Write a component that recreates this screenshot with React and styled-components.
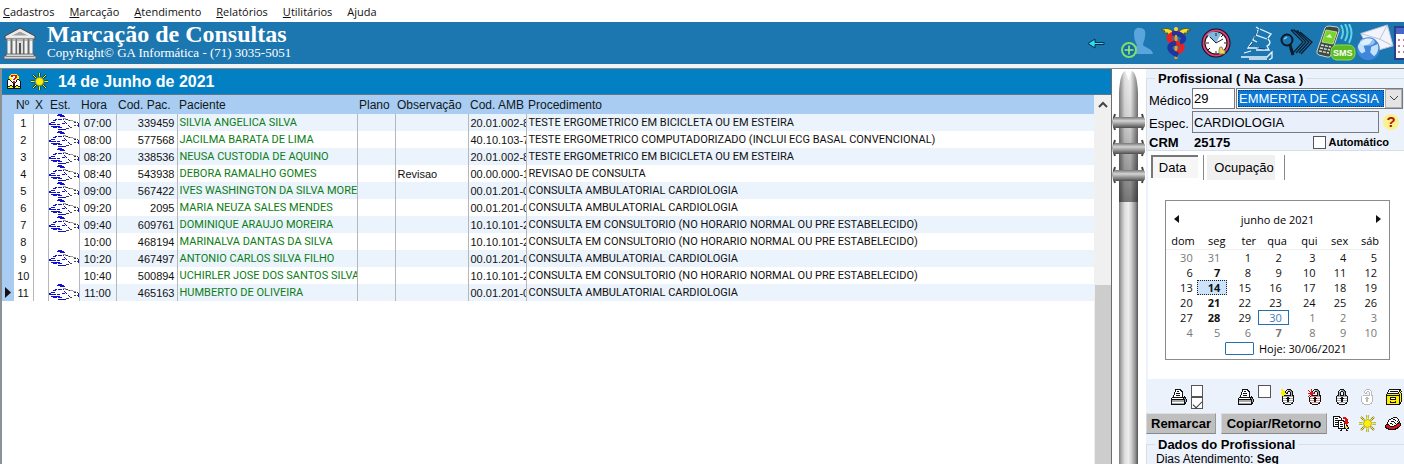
import React from "react";
import styled, { createGlobalStyle, css } from "styled-components";

const sans = '"Liberation Sans", Arial, sans-serif';
const narrow = 'Roboto, "Liberation Sans", sans-serif';
const ui = '"Open Sans", "Noto Sans", sans-serif';
const serif = '"Liberation Serif", "Times New Roman", serif';

const Global = createGlobalStyle`
  * { box-sizing: border-box; }
  body { margin: 0; background: #fff; color: #000; font-family: ${sans}; font-size: 12px; }
  button, input, select { font-family: inherit; color: inherit; border-radius: 0; margin: 0; }
  svg { display: block; }
`;

const Shell = styled.div`
  display: flex;
  flex-direction: column;
  height: 100vh;
  overflow: hidden;
`;

/* ---------- menu and banner ---------- */
const MenuBar = styled.nav`
  display: flex;
  flex: none;
  gap: 15px;
  height: 22px;
  padding: 2px 3px 0;
  font-family: ${ui};
`;
const MenuLink = styled.a`
  color: #111;
  font-size: 11px;
  line-height: 20px;
  text-decoration: none;
`;
const Banner = styled.header`
  display: flex;
  flex: none;
  align-items: center;
  height: 42px;
  padding-left: 3px;
  background: #1c77b0;
  color: #fff;
  font-family: ${serif};
`;
const BannerText = styled.div`
  flex: 1;
  padding: 0 0 5px 10px;
  white-space: nowrap;
`;
const BannerTitle = styled.h1`
  margin: 0;
  font-size: 24px;
  line-height: 24px;
`;
const BannerNote = styled.p`
  margin: 0;
  font-size: 13px;
  line-height: 13px;
`;
const BannerTools = styled.div`
  display: flex;
  width: 328px;
  overflow: hidden;
`;
const ToolButton = styled.button`
  display: flex;
  flex: none;
  align-items: center;
  justify-content: center;
  width: ${(p) => p.$width}px;
  height: 40px;
  padding: 0;
  border: 0;
  background: none;
`;
const Divider = styled.div`
  flex: none;
  height: 5px;
  background: #f1f4f7;
  border-bottom: 1px solid #85898d;
`;

const Main = styled.main`
  display: flex;
  flex: 1;
  min-height: 0;
`;

/* ---------- schedule ---------- */
const Schedule = styled.section`
  display: flex;
  flex: 1;
  flex-direction: column;
  min-width: 0;
  border-left: 2px solid #8c9196;
  border-right: 1px solid #6a6d70;
`;
const DayBar = styled.div`
  display: flex;
  flex: none;
  align-items: center;
  gap: 10px;
  height: 26px;
  padding: 0 5px;
  background: #0380c4;
  border-bottom: 1px solid #62788a;
  color: #fff;
`;
const DayTitle = styled.h2`
  margin: 0;
  font-size: 16px;
  line-height: 24px;
`;
const GridArea = styled.div`
  display: flex;
  flex: 1;
  min-height: 0;
`;
const GridBody = styled.div`
  flex: 1;
  min-width: 0;
`;
const Grid = styled.table`
  width: 100%;
  table-layout: fixed;
  border-collapse: collapse;
`;
const HeadCell = styled.th`
  height: 19px;
  padding: 1px 0 0 2px;
  background: #a9ccf2;
  color: #101820;
  font-size: 12px;
  font-weight: normal;
  line-height: 18px;
  text-align: left;
  white-space: nowrap;
`;
const Row = styled.tr`
  background: #fff;
  &:nth-child(odd) { background: #ebf3fd; }
`;
const Cell = styled.td`
  height: 17px;
  padding: 1px 2px 0;
  border-right: ${(p) => (p.$last ? 0 : "1px solid #b4b8bd")};
  overflow: hidden;
  color: ${(p) => (p.$green ? "#0b7d15" : "#111")};
  font-size: 11px;
  line-height: 16px;
  text-align: ${(p) => p.$align || "left"};
  white-space: nowrap;
  ${(p) => p.$caps && css`font-family: ${narrow};`}
  ${(p) => p.$white && css`background: #fff;`}
  ${(p) => p.$icon && css`padding: 0;`}
`;
const Marker = styled.td`
  padding: 0 0 0 3px;
  background: #a9ccf2;
`;
const ScrollBar = styled.div`
  display: flex;
  flex: none;
  flex-direction: column;
  width: 17px;
  padding-left: 1px;
  background: #f0f0f0;
`;
const ScrollUp = styled.button`
  display: flex;
  flex: none;
  align-items: center;
  justify-content: center;
  height: 18px;
  padding: 0;
  border: 0;
  background: none;
`;
const ScrollTrack = styled.div`
  display: flex;
  flex: 1;
  align-items: flex-end;
`;
const ScrollThumb = styled.div`
  width: 100%;
  height: 51%;
  background: #cdcdcd;
`;

/* ---------- binder pole ---------- */
const Binder = styled.div`
  display: flex;
  flex: none;
  flex-direction: column;
  width: 34px;
`;
const Pole = styled.div`
  flex: 1;
  width: 19px;
  margin-left: 7px;
  background: linear-gradient(90deg, #808080 0, #b4b4b4 15%, #dedede 30%, #eee 50%, #d0d0d0 65%, #8c8c8c 88%, #505050 100%);
`;

/* ---------- side panel ---------- */
const Side = styled.aside`
  flex: none;
  width: 258px;
  overflow: hidden;
  background: #ecf2fc;
`;
const Group = styled.fieldset`
  min-width: 0;
  margin: 0;
  padding: 0 0 0 2px;
  border: 1px solid #d5dfe6;
  border-right: 0;
`;
const Legend = styled.legend`
  margin-left: 6px;
  padding: 2px 3px 0;
  font-size: 13px;
  font-weight: bold;
  line-height: 16px;
  white-space: nowrap;
`;
const Line = styled.div`
  display: flex;
  align-items: center;
  height: ${(p) => p.$height}px;
`;
const Label = styled.label`
  flex: none;
  width: 43px;
  padding-top: 3px;
  font-size: 13px;
  white-space: nowrap;
`;
const TextBox = styled.input`
  width: ${(p) => p.$width}px;
  height: ${(p) => (p.$tall ? 22 : 21)}px;
  padding: 0 1px;
  border: 1px solid #777b80;
  background: ${(p) => (p.$tall ? "#e9effb" : "#fff")};
  font-size: 13px;
`;
const DoctorBox = styled.div`
  display: grid;
  flex: none;
  align-items: stretch;
  width: 167px;
  height: 21px;
  margin-left: 1px;
  border: 1px solid #777b80;
  background: #fff;
`;
const DoctorSelect = styled.select`
  grid-area: 1 / 1;
  min-width: 0;
  margin: 1px 18px 1px 1px;
  padding: 0 0 0 1px;
  border: 0;
  outline: 1px dotted #0b3d70;
  outline-offset: -1px;
  appearance: none;
  background: #0a78d6;
  color: #fff;
  font-size: 13px;
`;
const DoctorArrow = styled.span`
  display: flex;
  grid-area: 1 / 1;
  align-items: center;
  justify-content: center;
  justify-self: end;
  width: 17px;
  border: 1px solid #b0b0b0;
  background: #e4e4e4;
  pointer-events: none;
`;
const HelpButton = styled.button`
  width: 16px;
  height: 16px;
  margin-left: 4px;
  padding: 0;
  border: 0;
  border-radius: 8px;
  background: #fbf28c;
  color: #b3140f;
  font-size: 15px;
  font-weight: bold;
  line-height: 16px;
`;
const CrmTag = styled.span`
  width: 45px;
  font-size: 13px;
  font-weight: bold;
`;
const Crm = styled.strong`
  flex: 1;
  font-size: 13px;
`;
const AutoLabel = styled.label`
  display: flex;
  align-items: center;
  gap: 3px;
  padding-right: 15px;
  font-size: 11px;
  font-weight: bold;
`;
const Check = styled.input`
  display: grid;
  width: ${(p) => p.$size}px;
  height: ${(p) => p.$size}px;
  border: 1px solid #555;
  appearance: none;
  background: #fff;
  &:checked::before {
    content: "";
    place-self: center;
    width: 8px;
    height: 4px;
    border-left: 1px solid #333;
    border-bottom: 1px solid #333;
    transform: rotate(-45deg);
  }
`;
const Page = styled.div`
  height: 228px;
  margin-left: 2px;
  background: #fff;
`;
const Tabs = styled.div`
  display: flex;
  align-items: flex-start;
  padding: 4px 0 0 3px;
`;
const Tab = styled.button`
  width: ${(p) => p.$width}px;
  height: ${(p) => (p.$on ? 23 : 25)}px;
  padding: 0;
  border: 0;
  background: ${(p) => (p.$on ? "#f6f6f6" : "#f0f0f0")};
  font-size: 13px;
  ${(p) => p.$on
    ? css`
        border-top: 2px solid #777;
        border-left: 2px solid #777;
        padding-right: 6px;
      `
    : css`
        margin-left: 5px;
        border-left: 1px solid #888;
        border-right: 1px solid #888;
        box-shadow: inset 3px 0 #fff, inset -9px 0 #fff;
      `}
`;
const Calendar = styled.div`
  width: 225px;
  height: 160px;
  margin: 20px 0 0 17px;
  padding: 8px 8px 0 0;
  border: 1px solid #8b8b8b;
  font-family: ${ui};
`;
const CalHead = styled.div`
  display: flex;
  align-items: center;
  justify-content: space-between;
  height: 20px;
  padding: 0 0 0 8px;
  font-size: 11px;
`;
const Step = styled.button`
  width: 5px;
  height: 16px;
  padding: 0;
  border: 0;
  background: none;
`;
const Days = styled.table`
  width: 100%;
  margin-top: 3px;
  table-layout: fixed;
  border-collapse: collapse;
  font-size: 11px;
`;
const DayName = styled.th`
  height: 17px;
  padding: 1px 2px 0 0;
  border-bottom: 1px solid #f0f0f0;
  font-weight: normal;
  line-height: 15px;
  text-align: right;
`;
const Day = styled.td`
  height: 15px;
  padding: 0 4px 0 0;
  color: ${(p) => (p.$out ? "#777" : "#111")};
  font-weight: ${(p) => (p.$bold ? "bold" : "normal")};
  line-height: 15px;
  text-align: right;
  ${(p) => (p.$picked || p.$today) && css`padding-right: 8px;`}
  ${(p) => p.$picked && css`
    background: #cbe4fb;
    outline: 1px dotted #222;
    outline-offset: -1px;
  `}
  ${(p) => p.$today && css`
    color: #3f7fb8;
    outline: 1px solid #2370b0;
    outline-offset: -1px;
  `}
  ${(p) => p.$column > 0 && p.$column < 4 && css`padding-right: 7px;`}
`;
const Today = styled.div`
  display: flex;
  align-items: center;
  gap: 5px;
  margin-left: 59px;
  font-size: 11px;
  line-height: 17px;
  white-space: nowrap;
`;
const TodayBox = styled.span`
  width: 29px;
  height: 13px;
  border: 1px solid #2370b0;
  border-radius: 1px;
`;
const Tools = styled.div`
  display: flex;
  align-items: center;
  height: 34px;
  padding: 2px 0 0 24px;
`;
const SmallTool = styled.button`
  flex: none;
  width: 18px;
  height: 20px;
  margin-right: ${(p) => p.$gap || 0}px;
  padding: 1px;
  border: 0;
  background: none;
`;
const Checks = styled.div`
  display: flex;
  flex: none;
  flex-direction: column;
  width: 13px;
  height: 24px;
  margin: 0 ${(p) => p.$gap}px 0 3px;
`;
const Actions = styled.div`
  display: flex;
  align-items: center;
  height: 21px;
`;
const ActionButton = styled.button`
  flex: none;
  width: ${(p) => p.$width}px;
  height: 21px;
  margin-right: 5px;
  padding: 0;
  border: 1px solid;
  border-color: #e0e0e0 #999 #888 #d8d8d8;
  background: #bfbfbf;
  font-size: 13px;
  font-weight: bold;
  white-space: nowrap;
`;
const DataGroup = styled(Group)`
  margin-top: 1px;
  padding-left: 9px;
  & > ${Legend} { margin-left: -1px; }
`;
const DataLine = styled.p`
  margin: -2px 0 0;
  font-size: 12px;
  line-height: 16px;
`;

/* ---------- drawings ---------- */
const palette = { k: "#111", w: "#fff", g: "#a8a8a8", d: "#666", y: "#ffee00", r: "#dd1414", l: "#bbb", b: "#1111cc", o: "#d9b36a", p: "#d88" };

/* draws one square per character of the map */
function Pixels({ map }) {
  const w = Math.max(...map.map((r) => r.length));
  return (
    <svg width={w} height={map.length} shapeRendering="crispEdges" aria-hidden="true">
      {map.flatMap((row, y) =>
        [...row].map((c, x) => (palette[c] ? <rect key={x + "-" + y} x={x} y={y} width="1" height="1" fill={palette[c]} /> : null))
      )}
    </svg>
  );
}

const printer = [
  "    kkkkkk", "    kwwwwkk", "    kwkkwwkk", "   kwwwwwwwk", "   kwkkkkwwk", "   kwwwwwwwk", "  kwwkkkkwwk", "  kwwwwwwwwk k", " kkkkkkkkkkkkkk", "kwwwwwwwwwwwkgk", "kkkkkkkkkkkkkkgk", "kggggggggggggkgk", "kggggggggggggkgk", "kwwwwwwwwwwwwkk", "kggggggggggggkk", "kkkkkkkkkkkkkk",
];
const lock = [
  "     kkkk", "    kwggdk", "   kwgkkgdk", "   kgk  kgk", "   kgk  kgk", "   kgk  kgk", "  kkgkkkkgkk", " kggggggggggk", " kwwwwkkwwwwk", " kgggkkkkgggk", " kwwwwkkwwwwk", " kggggkkggggk", " kwwwwkkwwwwk", "  kggggggggk", "  kkwwwwwwkk", "    kkkkkk",
];
const openLock = [
  "yy    kkkk", "yyy  kwggdk", " yyykwgkkgdk", "yyyykgk  kgk", "yyyyykk  kgk", "yyyyy    kgk", " yykkkkkkkgkk", " kggggggggggk", " kwwwwkkwwwwk", " kgggkkkkgggk", " kwwwwkkwwwwk", " kggggkkggggk", " kwwwwkkwwwwk", "  kggggggggk", "  kkwwwwwwkk", "    kkkkkk",
];
const redLock = [
  "   r  kkkk", "r  r kwggdk", " r rkwgkkgdk", "  rrrgk  kgk", "rrrrrrr  kgk", "  rrr    kgk", " r rkkkkkkgkk", "r kpppppppppk", " kwwwwkkwwwwk", " kpppkkkkpppk", " kwwwwkkwwwwk", " kppppkkppppk", " kwwwwkkwwwwk", "  kppppppppk", "  kkwwwwwwkk", "    kkkkkk",
];
const paleLock = openLock.map((r) => r.replace(/y/g, " ").replace(/[wdg]/g, "w").replace(/k/g, "l"));
const cabinet = [
  "   kkkkkkkkkkkk", "  kwwwwwwwwwwkk", "  kwkkkkkkkkwkyk", " kwwwwwwwwwwkyk", " kkkkkkkkkkkkyyk", "kyyyyyyyyyyyykyk", "kkkkkkkkkkkkkkyk", "kyyyyyyyyyyyykyk", "kyyykkkkkkyyykyk", "kyyykwwwwkyyykyk", "kyyykkkkkkyyykyk", "kyyyyyyyyyyyykyk", "kyyykyyyykyyykyk", "kyyykkkkkkyyykk", "kyyyyyyyyyyyykk", "kkkkkkkkkkkkkk",
];
const copy = [
  "kkkkkkk", "kwwwwwkk  rrr", "kwkkkwwwk rrrr", "kwwwwwwwk   rrr", "kwkkkkkkkkk rrr", "kwwwwkwwwwkkrrr", "kwkkkkwkkwwrrrrr", "kwwwwkwwwwwkrrr", "kwkkkkwkkkwk r", "kwwwwkwwwwwk kk", "kkkkkkwkkkwkyyk", "     kwwwwwkoyyk", "     kkkkkkkk kk", "        k    k", "       kk    kk",
];
const tray = [
  "        kkkk", "      kkwwwwk", "    kkwwkkwwwk", "   kwwwwwwkwwk", "   kwwkkkwwwkwk", "  kwwwwwwkwwwkk", "  kwwkkwwwkwkkrk", " kkkwwwkwwwkrrrk", "krrrkwwwwkkrrrrk", "krrrrkkkkrrrrrk", "kkrrrrrrrrrrkk", " kkkrrrrrrkkk", "   kkkkkkkk",
];
const book = [
  "    yyyyyy", "   yrrrrrry", "  yyrrwwrryy", "  ywwwwwrryy", "  yyywwrryyy", " kkyywrrwykk", "kwwkwwwwwkwwk", "kwwwkwrrwkwwwk", "kwwwwkrrkwwwwk", "kwwwwwkkwwwwwk", "kwwwwwkkwwwwwk", "kwwkkwkkwkkwwk", "kkkyykkkkyykkk", "kyyyyykkyyyyyk", "kkkkkkkkkkkkkk",
];

const Sun = ({ dark }) => (
  <svg width="17" height="17" viewBox="0 0 17 17" aria-hidden="true">
    <path d="M8.500 0V17M0 8.500H17M2 2L15 15M15 2L2 15" stroke={dark ? "#152a1a" : "#77772a"} strokeWidth="2" />
    <path d="M8.500 0V17M0 8.500H17M2 2L15 15M15 2L2 15" stroke="#fff200" />
    <circle cx="8.500" cy="8.500" r="5" fill={dark ? "#0380c4" : "#ecf2fc"} />
    <circle cx="8.500" cy="8.500" r="4" fill="#ffee00" stroke="#8c8200" strokeWidth=".6" />
  </svg>
);

const Hands = () => (
  <svg width="31" height="17" viewBox="0 0 31 17" fill="none" shapeRendering="crispEdges" aria-hidden="true">
    <path d="M9 0.500h4M8 1.500h7M11 2.500h5" stroke="#1111cc" />
    <path d="M14 4l5 2 2 0 6 2" stroke="#9b9b9b" />
    <path d="M17 5l4 2M25 8l4 1" stroke="#333" strokeDasharray="2 1" />
    <path d="M4 7l5-2 6 1M0 10l4-2M15 7l3 3 3 3M3 10l8 0M2 12l10 0M4 14l10-1" stroke="#1111cc" strokeDasharray="4 1" />
    <path d="M0 10.500h3M2 8.500h4M6 12.500h5M9 15.500h8M13 9.500h3" stroke="#1111cc" strokeWidth="1.500" />
    <path d="M17 15l4-1 4-2 4-1" stroke="#444" strokeDasharray="3 1" />
    <path d="M29.500 9v4" stroke="#1111cc" strokeWidth="2" />
  </svg>
);

const Temple = () => (
  <svg width="34" height="34" viewBox="0 0 34 34" aria-hidden="true">
    <path d="M17 2L32 10V13H2V10Z" fill="#e5e5e5" stroke="#444" />
    <path d="M17 5L27 10H7Z" fill="#a2a2a2" stroke="#fff" strokeWidth=".8" />
    <path d="M4 13H30V28H4Z" fill="#6a6a6a" />
    <path d="M6 13v15M11 13v15M23 13v15M28 13v15" stroke="#f3f3f3" strokeWidth="3" />
    <path d="M17 13v15" stroke="#ddd" strokeWidth="6" />
    <path d="M17 17v11" stroke="#555" strokeWidth="2" />
    <path d="M3 28H31V30H33V33H1V30H3Z" fill="#d7d7d7" stroke="#555" strokeWidth=".8" />
    <path d="M3 14H31M3 30.500H31" stroke="#888" />
  </svg>
);

const BackArrow = () => (
  <svg width="18" height="11" viewBox="0 0 18 11" aria-hidden="true">
    <path d="M1 5.500L8 1V4.500H17V6.500H8V10Z" fill="#27e3ef" stroke="#062c48" />
  </svg>
);
const AddUser = () => (
  <svg width="34" height="34" viewBox="0 0 34 34" aria-hidden="true">
    <path d="M15 8C15 3 18 1 21 2C26 2 27 6 26 10C26 14 24 16 24 19C26 22 33 22 34 28H12C12 23 17 22 18 19C16 16 15 12 15 8Z" fill="#5aa5dc" />
    <circle cx="10" cy="24" r="7" fill="#1769a8" stroke="#7ee06c" strokeWidth="2" />
    <path d="M10 19.500v9M5.500 24h9" stroke="#8ff07a" strokeWidth="1.600" />
  </svg>
);
const Caduceus = () => (
  <svg width="32" height="34" viewBox="0 0 32 34" fill="none" aria-hidden="true">
    <path d="M15 7C9 1 5 2 1 4L5 5L4 7L8 7L7 10L14 10ZM17 7C23 1 27 2 31 4L27 5L28 7L24 7L25 10L18 10Z" fill="#f5dc27" stroke="#4c4b18" strokeWidth=".8" />
    <path d="M16 3V33" stroke="#d9a526" strokeWidth="3" />
    <path d="M20 7C6 8 6 15 16 17C25 19 24 25 14 27" stroke="#e52525" strokeWidth="5" />
    <path d="M12 7C26 8 26 15 20 16" stroke="#20339f" strokeWidth="5" />
    <path d="M16 17C7 19 8 25 18 29" stroke="#20339f" strokeWidth="5" />
    <path d="M16 9V15M16 20V25" stroke="#d9a526" strokeWidth="2" />
    <circle cx="16" cy="3" r="2" fill="#f5dc27" />
  </svg>
);
const Clock = () => (
  <svg width="30" height="30" viewBox="0 0 30 30" aria-hidden="true">
    <circle cx="15" cy="15" r="12.500" fill="#fff" stroke="#111" strokeWidth="4" />
    <circle cx="15" cy="15" r="12.500" fill="none" stroke="#e0407d" strokeWidth="2" />
    <path d="M6 7L15 15L20 6C15 3 10 3 6 7Z" fill="#80b9df" />
    <path d="M15 15L9 9M15 15L22 11M15 5v3M15 23v3M5 15h3M23 15h3M7 22l2-2M22 7l-2 2" stroke="#222" />
    <path d="M19 19l2 0 1 3h2v4h-6v-4z" fill="#f0d653" stroke="#555" strokeWidth=".6" />
  </svg>
);
const Microscope = () => (
  <svg width="34" height="34" viewBox="0 0 34 34" fill="none" stroke="#e9f5ff" strokeWidth="1.300" aria-hidden="true">
    <path d="M17 1L20 3M21 3L32 8L29 12M19 4L17 9L28 13M16 10L14 14L18 16M29 13C32 16 31 19 28 20L30 24H17M13 16L9 22H20M2 31H28L33 26V32L30 34M5 27L12 25M10 33H28" />
    <path d="M18 5L15 13M10 21L14 17M18 22L26 23" stroke="#0b3e68" strokeWidth=".8" />
  </svg>
);
const Search = () => (
  <svg width="34" height="30" viewBox="0 0 34 30" fill="none" stroke="#0a1b2c" strokeWidth="1.200" aria-hidden="true">
    <path d="M12 2L24 14L14 25L11 21M15 2L27 14L17 25M18 3L30 14L20 25M21 4L33 14L22 26M12 2H16M15 3H20" />
    <circle cx="8" cy="12" r="5.500" strokeWidth="2" />
    <path d="M11 17L14 27" strokeWidth="3" />
    <path d="M5 11l3-2" stroke="#9ad0ee" />
  </svg>
);
const Sms = styled.text`
  fill: #fff;
  font: bold 9px ${sans};
`;
const Phone = () => (
  <svg width="40" height="38" viewBox="0 0 40 38" aria-hidden="true">
    <path d="M9 4Q10 2 13 2L21 3Q24 4 23 7L15 31Q14 34 11 33L3 31Q0 30 1 27Z" fill="#3f4b42" stroke="#c9d8cf" />
    <path d="M10 6L21 8L17 20L6 18Z" fill="#79d32b" stroke="#d6f5b6" strokeWidth=".7" />
    <path d="M10 13l4-3 2 4z" fill="#e9ffd9" />
    <path d="M5 21l10 2M4 24l10 2M3 27l10 2" stroke="#d4dbd6" strokeWidth="1.500" strokeDasharray="3 1" />
    <path d="M25 1q4 7 0 14M29 0q5 8 0 17M33 0q5 9 0 19" fill="none" stroke="#5fd4e4" strokeWidth="2" />
    <rect x="15" y="21" width="24" height="15" rx="6" fill="#5bbb23" stroke="#8bdb50" />
    <Sms x="17" y="32">SMS</Sms>
  </svg>
);
const MailGlobe = () => (
  <svg width="40" height="38" viewBox="0 0 40 38" aria-hidden="true">
    <path d="M5 9L33 0L39 22L15 29Z" fill="#f3f4fb" stroke="#bcc5dd" />
    <path d="M5 9L25 15L33 0M25 15L39 22" fill="none" stroke="#b6bfd8" />
    <circle cx="13" cy="25" r="12" fill="#3f86dc" />
    <path d="M3 20Q9 12 18 15L14 20L8 22L10 28L6 30Q0 24 3 20ZM16 23L23 20Q25 28 19 33L15 29Z" fill="#c3e1fa" />
    <ellipse cx="12" cy="18" rx="8" ry="4" fill="#fff" opacity=".45" />
  </svg>
);
const Agenda = () => (
  <svg width="30" height="34" viewBox="0 0 30 34" aria-hidden="true">
    <rect x="1" y="1" width="28" height="32" fill="#fff" stroke="#2b3f88" strokeWidth="2" />
    <path d="M2 5h26" stroke="#4868c9" strokeWidth="6" />
    <path d="M4 14h24M4 20h24M4 26h24" stroke="#c478a0" strokeWidth="2" strokeDasharray="2 3" />
  </svg>
);
const BinderTop = () => (
  <svg width="34" height="133" viewBox="0 0 34 133" aria-hidden="true">
    <defs>
      <linearGradient id="pole">
        <stop offset="0" stopColor="#808080" /><stop offset=".3" stopColor="#e2e2e2" />
        <stop offset=".6" stopColor="#f0f0f0" /><stop offset="1" stopColor="#777" />
      </linearGradient>
      <linearGradient id="dark" x2="0" y2="1">
        <stop offset="0" stopColor="#000" stopOpacity="0" /><stop offset=".35" stopColor="#000" stopOpacity=".1" />
        <stop offset="1" stopColor="#000" stopOpacity=".5" />
      </linearGradient>
      <linearGradient id="ring" x2="0" y2="1">
        <stop offset="0" stopColor="#777" /><stop offset=".35" stopColor="#d4d4d4" /><stop offset="1" stopColor="#4d4d4d" />
      </linearGradient>
    </defs>
    <path d="M7 133V24Q8 4 13 2H20Q25 4 26 24V133Z" fill="url(#pole)" />
    <path d="M13 1H20L16.500 12Z" fill="#fff" />
    <path d="M7 133V24Q8 4 13 2H20Q25 4 26 24V133Z" fill="url(#dark)" />
    {[53, 79, 106].map((y) => (
      <g key={y}>
        <path d={`M3 ${y - 8}Q0 ${y} 3 ${y + 8}M30 ${y - 8}Q33 ${y} 30 ${y + 8}`} fill="none" stroke="#444" strokeWidth="2" />
        <rect x="1" y={y - 5} width="32" height="11" rx="3" fill="url(#ring)" />
      </g>
    ))}
  </svg>
);
const Chevron = ({ up }) => (
  <svg width="10" height="7" viewBox="0 0 10 7" fill="none" stroke="#444" strokeWidth={up ? 2 : 1} aria-hidden="true">
    <path d={up ? "M1 6L5 2L9 6" : "M1 1L5 5L9 1"} />
  </svg>
);
const Triangle = ({ right, width = 5, height = 8 }) => (
  <svg width={width} height={height} viewBox="0 0 5 8" preserveAspectRatio="none" aria-hidden="true">
    <path d={right ? "M0 0L5 4L0 8Z" : "M5 0L0 4L5 8Z"} fill="#111" />
  </svg>
);

/* ---------- data ---------- */
const menu = [["", "C", "adastros"], ["", "M", "arcação"], ["", "A", "tendimento"], ["", "R", "elatórios"], ["", "U", "tilitários"], ["A", "j", "uda"]];
const bannerTools = [
  ["Voltar", BackArrow, 40], ["Novo paciente", AddUser, 40], ["Médicos", Caduceus, 40], ["Horários", Clock, 40], ["Exames", Microscope, 40],
  ["Pesquisar", Search, 40], ["SMS", Phone, 40], ["E-mail", MailGlobe, 38], ["Agenda", Agenda, 30],
];
const widths = [12, 19, 15, 31, 37, 61, 180, 38, 73, 58, null];
const heads = ["", "Nº", "X", "Est.", "Hora", "Cod. Pac.", "Paciente", "Plano", "Observação", "Cod. AMB", "Procedimento"];
const ergo = "TESTE ERGOMETRICO EM BICICLETA OU EM ESTEIRA";
const amb = "CONSULTA AMBULATORIAL CARDIOLOGIA";
const cons = "CONSULTA EM CONSULTORIO (NO HORARIO NORMAL OU PRE ESTABELECIDO)";
const rows = [
  [1, 1, "07:00", "339459", "SILVIA ANGELICA SILVA", "", "20.01.002-8", ergo],
  [2, 1, "08:00", "577568", "JACILMA BARATA DE LIMA", "", "40.10.103-7", "TESTE ERGOMETRICO COMPUTADORIZADO (INCLUI ECG BASAL CONVENCIONAL)"],
  [3, 1, "08:20", "338536", "NEUSA CUSTODIA DE AQUINO", "", "20.01.002-8", ergo],
  [4, 1, "08:40", "543938", "DEBORA RAMALHO GOMES", "Revisao", "00.00.000-1", "REVISAO DE CONSULTA"],
  [5, 1, "09:00", "567422", "IVES WASHINGTON DA SILVA MOREIRA", "", "00.01.201-0", amb],
  [6, 1, "09:20", "2095", "MARIA NEUZA SALES MENDES", "", "00.01.201-0", amb],
  [7, 1, "09:40", "609761", "DOMINIQUE ARAUJO MOREIRA", "", "10.10.101-2", cons],
  [8, 0, "10:00", "468194", "MARINALVA DANTAS DA SILVA", "", "10.10.101-2", cons],
  [9, 1, "10:20", "467497", "ANTONIO CARLOS SILVA FILHO", "", "00.01.201-0", amb],
  [10, 0, "10:40", "500894", "UCHIRLER JOSE DOS SANTOS SILVA", "", "10.10.101-2", cons],
  [11, 1, "11:00", "465163", "HUMBERTO DE OLIVEIRA", "", "00.01.201-0", amb],
];
const weekdays = ["dom", "seg", "ter", "qua", "qui", "sex", "sáb"];
const weeks = Array.from({ length: 6 }, (_, w) =>
  Array.from({ length: 7 }, (_, d) => {
    const date = new Date(2021, 4, 30 + w * 7 + d);
    const n = date.getDate();
    const out = date.getMonth() !== 5;
    return { n, out, bold: (!out && d === 1) || (out && w === 5 && n === 7), picked: !out && n === 14, today: !out && n === 30 };
  })
);

export default function App() {
  return (
    <Shell>
      <Global />
      <MenuBar>
        {menu.map(([before, key, after]) => <MenuLink key={key} href="#">{before}<u>{key}</u>{after}</MenuLink>)}
      </MenuBar>
      <Banner>
        <Temple />
        <BannerText>
          <BannerTitle>Marcação de Consultas</BannerTitle>
          <BannerNote>CopyRight© GA Informática - (71) 3035-5051</BannerNote>
        </BannerText>
        <BannerTools>
          {bannerTools.map(([name, Icon, width]) => <ToolButton key={name} aria-label={name} $width={width}><Icon /></ToolButton>)}
        </BannerTools>
      </Banner>
      <Divider />
      <Main>
        <Schedule>
          <DayBar>
            <Pixels map={book} />
            <Sun dark />
            <DayTitle>14 de Junho de 2021</DayTitle>
          </DayBar>
          <GridArea>
            <GridBody>
              <Grid>
                <colgroup>{widths.map((w, i) => <col key={i} width={w || undefined} />)}</colgroup>
                <thead><tr>{heads.map((h, i) => <HeadCell key={i}>{h}</HeadCell>)}</tr></thead>
                <tbody>
                  {rows.map(([n, hands, hour, code, patient, note, ambCode, procedure]) => (
                    <Row key={n}>
                      <Marker>{n === 11 && <Triangle right width={6} height={11} />}</Marker>
                      <Cell $align="center" $white>{n}</Cell>
                      <Cell $white />
                      <Cell $white $icon>{hands ? <Hands /> : null}</Cell>
                      <Cell $align="center">{hour}</Cell>
                      <Cell $align="right">{code}</Cell>
                      <Cell $green $caps>{patient}</Cell>
                      <Cell />
                      <Cell>{note}</Cell>
                      <Cell>{ambCode}</Cell>
                      <Cell $last $caps>{procedure}</Cell>
                    </Row>
                  ))}
                </tbody>
              </Grid>
            </GridBody>
            <ScrollBar>
              <ScrollUp aria-label="Rolar para cima"><Chevron up /></ScrollUp>
              <ScrollTrack><ScrollThumb /></ScrollTrack>
            </ScrollBar>
          </GridArea>
        </Schedule>
        <Binder><BinderTop /><Pole /></Binder>
        <Side>
          <Group>
            <Legend>Profissional ( Na Casa )</Legend>
            <Line $height={23}>
              <Label htmlFor="medico">Médico</Label>
              <TextBox id="medico" $width={43} defaultValue="29" />
              <DoctorBox>
                <DoctorSelect aria-label="Nome do médico"><option>EMMERITA DE CASSIA</option></DoctorSelect>
                <DoctorArrow><Chevron /></DoctorArrow>
              </DoctorBox>
            </Line>
            <Line $height={24}>
              <Label htmlFor="espec">Espec.</Label>
              <TextBox id="espec" $tall $width={187} defaultValue="CARDIOLOGIA" />
              <HelpButton>?</HelpButton>
            </Line>
            <Line $height={16}>
              <CrmTag>CRM</CrmTag>
              <Crm>25175</Crm>
              <AutoLabel><Check type="checkbox" $size={13} />Automático</AutoLabel>
            </Line>
          </Group>
          <Page>
            <Tabs>
              <Tab $on $width={47}>Data</Tab>
              <Tab $width={82}>Ocupação</Tab>
            </Tabs>
            <Calendar>
              <CalHead>
                <Step aria-label="Mês anterior"><Triangle /></Step>
                <span>junho de 2021</span>
                <Step aria-label="Próximo mês"><Triangle right /></Step>
              </CalHead>
              <Days>
                <thead><tr>{weekdays.map((d) => <DayName key={d}>{d}</DayName>)}</tr></thead>
                <tbody>
                  {weeks.map((week, i) => (
                    <tr key={i}>
                      {week.map((d, column) => <Day key={d.n} $column={column} $out={d.out} $bold={d.bold} $picked={d.picked} $today={d.today}>{d.n}</Day>)}
                    </tr>
                  ))}
                </tbody>
              </Days>
              <Today><TodayBox />Hoje: 30/06/2021</Today>
            </Calendar>
          </Page>
          <Tools>
            <SmallTool aria-label="Imprimir"><Pixels map={printer} /></SmallTool>
            <Checks $gap={33}>
              <Check type="checkbox" aria-label="Opção 1" $size={12} />
              <Check type="checkbox" aria-label="Opção 2" $size={12} defaultChecked />
            </Checks>
            <SmallTool aria-label="Imprimir lista"><Pixels map={printer} /></SmallTool>
            <Checks $gap={9}><Check type="checkbox" aria-label="Opção 3" $size={13} /></Checks>
            <SmallTool $gap={9} aria-label="Abrir horário"><Pixels map={openLock} /></SmallTool>
            <SmallTool $gap={9} aria-label="Bloquear dia"><Pixels map={redLock} /></SmallTool>
            <SmallTool $gap={7} aria-label="Bloquear"><Pixels map={lock} /></SmallTool>
            <SmallTool $gap={8} aria-label="Desbloquear"><Pixels map={paleLock} /></SmallTool>
            <SmallTool aria-label="Arquivo"><Pixels map={cabinet} /></SmallTool>
          </Tools>
          <Actions>
            <ActionButton $width={70}>Remarcar</ActionButton>
            <ActionButton $width={106}>Copiar/Retorno</ActionButton>
            <SmallTool $gap={8} aria-label="Copiar"><Pixels map={copy} /></SmallTool>
            <SmallTool $gap={8} aria-label="Turno"><Sun /></SmallTool>
            <SmallTool aria-label="Fichas"><Pixels map={tray} /></SmallTool>
          </Actions>
          <DataGroup>
            <Legend>Dados do Profissional</Legend>
            <DataLine>Dias Atendimento: <strong>Seg</strong></DataLine>
          </DataGroup>
        </Side>
      </Main>
    </Shell>
  );
}
